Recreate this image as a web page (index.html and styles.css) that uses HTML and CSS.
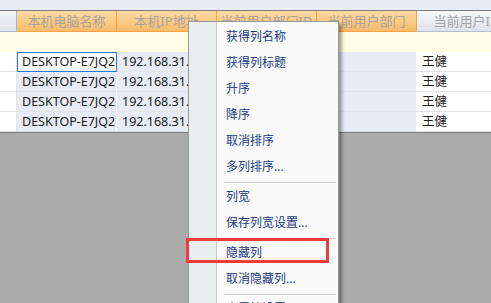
FILE: index.html
```html
<!DOCTYPE html>
<html>
<head>
  <meta charset="utf-8" />
  <title>Grid</title>
  <link rel="stylesheet" href="styles.css">
</head>
<body>
  <div class="window">
    <div class="top-band"></div>

    <!-- Tabelle -->
    <div class="grid">
      <div class="row head-row">
        <div class="cell row-head"></div>
        <div class="cell col-sel">本机电脑名称</div>
        <div class="cell col-sel">本机IP地址</div>
        <div class="cell col-sel">当前用户部门ID</div>
        <div class="cell col-sel">当前用户部门</div>
        <div class="cell col-plain">当前用户ID</div>
      </div>
      <div class="row filter-row"></div>

      <div class="row data-row">
        <div class="cell row-head"></div>
        <div class="cell sel focus">DESKTOP-E7JQ2</div>
        <div class="cell sel">192.168.31.1</div>
        <div class="cell sel"></div>
        <div class="cell sel"></div>
        <div class="cell">王健</div>
      </div>
      <div class="row data-row">
        <div class="cell row-head"></div>
        <div class="cell sel">DESKTOP-E7JQ2</div>
        <div class="cell sel">192.168.31.1</div>
        <div class="cell sel"></div>
        <div class="cell sel"></div>
        <div class="cell">王健</div>
      </div>
      <div class="row data-row">
        <div class="cell row-head"></div>
        <div class="cell sel">DESKTOP-E7JQ2</div>
        <div class="cell sel">192.168.31.1</div>
        <div class="cell sel"></div>
        <div class="cell sel"></div>
        <div class="cell">王健</div>
      </div>
      <div class="row data-row">
        <div class="cell row-head"></div>
        <div class="cell sel">DESKTOP-E7JQ2</div>
        <div class="cell sel">192.168.31.9</div>
        <div class="cell sel"></div>
        <div class="cell sel"></div>
        <div class="cell">王健</div>
      </div>
    </div>

    <div class="empty-area"></div>
  </div>

  <!-- Kontextmenü -->
  <div class="menu">
    <div class="menu-item">获得列名称</div>
    <div class="menu-item">获得列标题</div>
    <div class="menu-item">升序</div>
    <div class="menu-item">降序</div>
    <div class="menu-item">取消排序</div>
    <div class="menu-item">多列排序...</div>
    <div class="menu-sep"></div>
    <div class="menu-item">列宽</div>
    <div class="menu-item">保存列宽设置...</div>
    <div class="menu-sep"></div>
    <div class="menu-item">隐藏列</div>
    <div class="menu-item">取消隐藏列...</div>
    <div class="menu-sep"></div>
    <div class="menu-item">表属性设置</div>
  </div>

  <!-- Markierung -->
  <div class="highlight"></div>
</body>
</html>
```

FILE: styles.css
```css
html, body {
  margin: 0;
  padding: 0;
  height: 100%;
  overflow: hidden;
  font-family: "Noto Sans", "Noto Sans CJK SC", sans-serif;
  font-size: 12px;
}

.window {
  display: flex;
  flex-direction: column;
  height: 100%;
}

.top-band {
  height: 10px;
  background: #e7edf7;
  border-bottom: 1px solid #7c7c7c;
}

/* Tabelle */
.grid {
  display: flex;
  flex-direction: column;
}

.row {
  display: flex;
  white-space: nowrap;
}

.cell {
  flex: 0 0 100px;
  box-sizing: border-box;
  overflow: hidden;
  border-right: 1px solid #fff;
  border-bottom: 1px solid #e2e2e8;
  padding-left: 5px;
  color: #1a1a1a;
}

.cell.row-head {
  flex-basis: 17px;
  padding: 0;
  background: #fff;
  border-right: 1px solid #e2e2e8;
}

.head-row {
  height: 21px;
}

.head-row .cell {
  line-height: 20px;
  text-align: center;
  padding: 0;
  font-size: 13px;
  color: #aaa39c;
  border-bottom: 1px solid #f2a545;
}

.head-row .row-head {
  background: linear-gradient(#f3f5f9, #dde3ec);
  border-right: 1px solid #a9b6ca;
  border-bottom: 1px solid #a9b6ca;
}

.head-row .col-sel {
  background: linear-gradient(#fbdaa6, #f6bb6a);
  border-right: 1px solid #f0a445;
}

.head-row .col-plain {
  background: linear-gradient(#f6f8fb, #dce2ec);
  color: #a4a4a4;
  border-bottom: 1px solid #b5c0d0;
}

.filter-row {
  height: 20px;
  background: #fffde3;
}

.data-row {
  height: 20px;
}

.data-row .cell {
  line-height: 19px;
  font-size: 12.5px;
}

.cell.sel {
  background: #e8eaf5;
}

.cell.focus {
  background: #fff;
  border: 1px solid #2b79d3;
  padding-left: 4px;
  line-height: 18px;
}

.empty-area {
  flex: 1;
  background: #ababab;
  border-top: 1px solid #7e7e7e;
}

/* Kontextmenü */
.menu {
  position: absolute;
  left: 188px;
  top: 21px;
  width: 151px;
  height: 320px;
  box-sizing: border-box;
  padding-top: 2px;
  border: 1px solid #9a9a9a;
  background: linear-gradient(to right, #e9eeee 0 27px, #c9cdcd 27px 28px, #fafafa 28px);
  box-shadow: 3px 3px 3px rgba(0, 0, 0, 0.35);
}

.menu-item {
  height: 26px;
  line-height: 26px;
  padding-left: 37px;
  color: #223b84;
  white-space: nowrap;
}

.menu-sep {
  height: 4px;
  margin: 0 2px 0 35px;
  box-sizing: border-box;
  border-bottom: 1px solid #cdcdcd;
  transform: translateY(-1px);
}

.highlight {
  position: absolute;
  left: 186px;
  top: 238px;
  width: 143px;
  height: 25px;
  box-sizing: border-box;
  border: 3px solid #f23b3b;
}
```
